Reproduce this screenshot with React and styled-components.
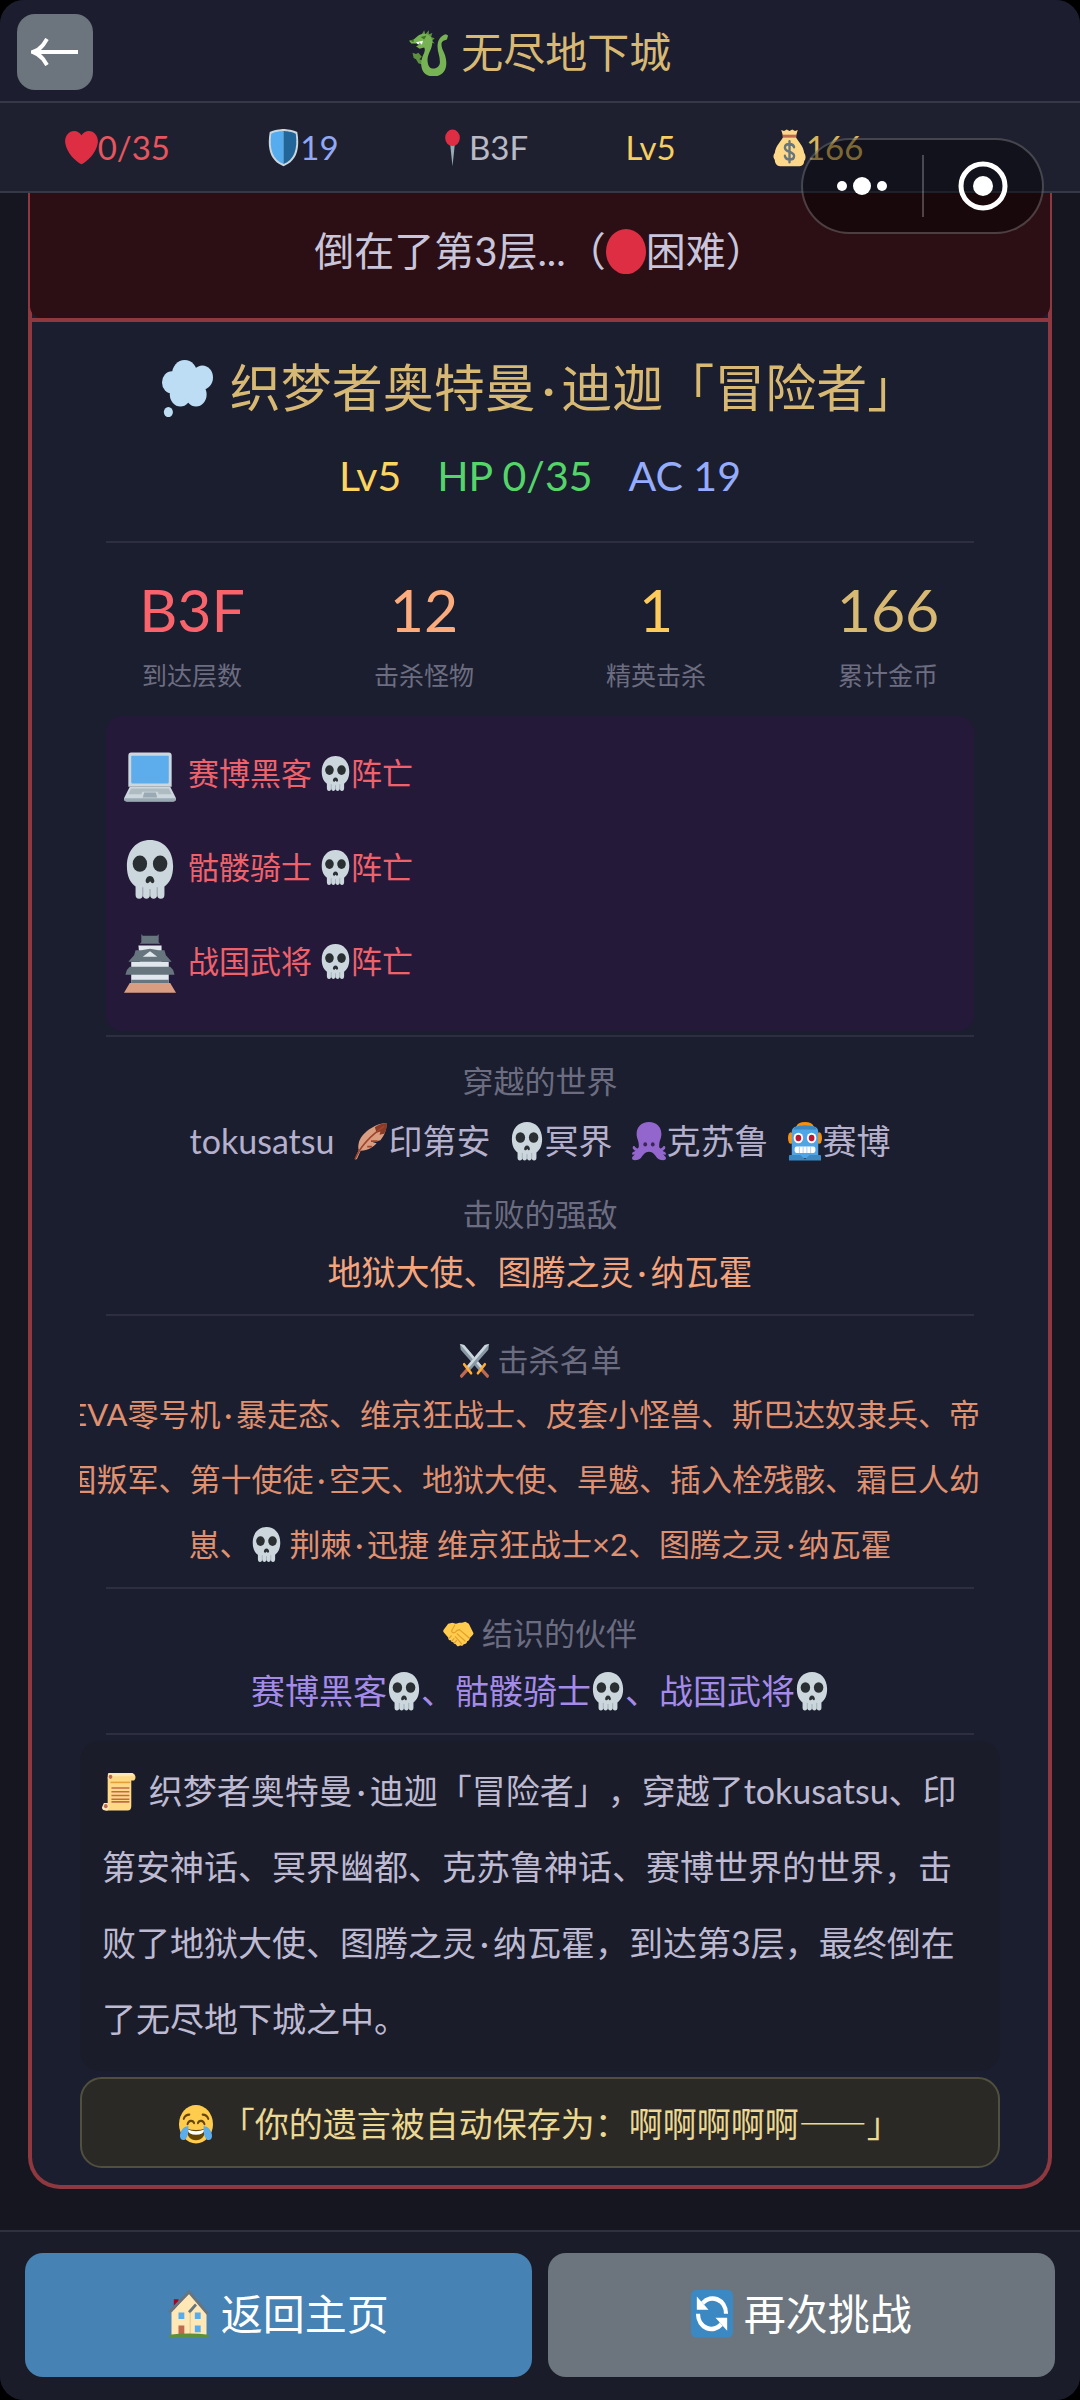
import React, { Fragment } from "react";
import styled, { createGlobalStyle } from "styled-components";

const GlobalStyle = createGlobalStyle`
  * {
    box-sizing: border-box;
  }

  body {
    margin: 0;
    background-color: #000;
    color: #c9c6dc;
    font-family: Lato, "Noto Sans CJK SC", sans-serif;
    text-spacing-trim: space-all;
  }
`;

const Page = styled.div`
  position: relative;
  display: flex;
  flex-direction: column;
  min-height: 100vh;
  background-color: #15161f;
  border-radius: 24px;
  overflow: hidden;
`;

const Header = styled.header`
  display: grid;
  grid-template-columns: 76px 1fr 76px;
  align-items: center;
  padding: 14px 17px 11px;
  background-color: #1c1e2f;
  border-bottom: 2px solid #363848;
`;

const BackButton = styled.button`
  display: flex;
  align-items: center;
  justify-content: center;
  width: 76px;
  height: 76px;
  padding: 0;
  border: none;
  border-radius: 18px;
  background-color: #6c757d;
  color: #fff;
`;

const Title = styled.h1`
  margin: 0;
  color: #d8b974;
  font-size: 42px;
  font-weight: 400;
  line-height: 60px;
  text-align: center;
`;

const StatusBar = styled.div`
  display: flex;
  align-items: center;
  justify-content: space-around;
  height: 90px;
  padding: 0 168px 0 16px;
  background-color: #1e202f;
  border-bottom: 2px solid #363848;
  font-size: 33px;
  line-height: 48px;
`;

const Tone = styled.span`
  color: ${(props) => props.$color};
  white-space: nowrap;
`;

const Capsule = styled.div`
  position: absolute;
  top: 138px;
  right: 36px;
  display: flex;
  align-items: center;
  width: 243px;
  height: 96px;
  border: 2px solid rgba(255, 255, 255, 0.22);
  border-radius: 48px;
  background-color: rgba(0, 0, 0, 0.42);
`;

const CapsuleButton = styled.button`
  display: flex;
  flex: 1;
  align-items: center;
  justify-content: center;
  padding: 0;
  border: none;
  background: none;
`;

const CapsuleLine = styled.span`
  width: 2px;
  height: 62px;
  background-color: rgba(255, 255, 255, 0.24);
`;

const Main = styled.main`
  flex: 1;
  padding: 0 28px 40px;
`;

const Card = styled.section`
  border: 4px solid #8f383f;
  border-top: none;
  border-radius: 0 0 32px 32px;
  background-color: #1b1e2f;
`;

const BannerFrame = styled.div`
  border-bottom: 4px solid #8f383f;
`;

const Banner = styled.p`
  margin: 0 -2px;
  padding: 28px 0 37px;
  border-radius: 0 0 12px 12px;
  background-color: #2c0f14;
  font-size: 40px;
  line-height: 60px;
  text-align: center;
`;

const Body = styled.div`
  display: flex;
  flex-direction: column;
  padding: 30px 48px 17px;
`;

const HeroName = styled.h2`
  margin: 0;
  color: #d8b974;
  font-size: 51px;
  font-weight: 400;
  line-height: 72px;
  text-align: center;
  white-space: nowrap;
`;

const HeroStats = styled.div`
  display: flex;
  justify-content: center;
  gap: 36px;
  margin: 24px 0 37px;
  font-size: 41px;
  line-height: 56px;
`;

const Divider = styled.hr`
  width: calc(100% - 52px);
  height: 2px;
  margin: 0 auto;
  border: none;
  background-color: #2d2f41;
`;

const Totals = styled.dl`
  display: grid;
  grid-template-columns: repeat(4, 1fr);
  margin: 31px -4px 23px;
`;

const Total = styled.div`
  display: flex;
  flex-direction: column-reverse;
  gap: 11px;
  text-align: center;
`;

const TotalValue = styled.dd`
  margin: 0;
  color: ${(props) => props.$color};
  font-size: 59px;
  line-height: 72px;
`;

const TotalLabel = styled.dt`
  color: #6c6d80;
  font-size: 25px;
  line-height: 36px;
`;

const Party = styled.ul`
  margin: 0 26px 4px;
  padding: 12px 18px 21px;
  border-radius: 16px;
  background-color: #25193a;
  list-style: none;
`;

const Member = styled.li`
  display: flex;
  align-items: center;
  gap: 12px;
  height: 94px;
  color: #f0626b;
  font-size: 31px;
`;

const Portrait = styled.span`
  font-size: 52px;
  line-height: 60px;
`;

const MemberName = styled.span`
  padding-bottom: 7px;
`;

const Label = styled.h3`
  margin: 22px 0 0;
  color: #6c6d80;
  font-size: 31px;
  font-weight: 400;
  line-height: 44px;
  text-align: center;
`;

const Worlds = styled.div`
  display: flex;
  justify-content: center;
  gap: 20px;
  margin: 14px 0 5px;
  color: #b5b0cc;
  font-size: 34px;
  line-height: 48px;
  white-space: nowrap;
`;

const TextLine = styled.p`
  margin: 12px 0 18px;
  color: ${(props) => props.$color};
  font-size: 34px;
  line-height: 48px;
  text-align: center;
`;

const KillList = styled.div`
  margin-bottom: 10px;
  overflow: hidden;
  color: #e0916f;
  font-size: 31px;
  line-height: 65px;
  white-space: nowrap;
`;

const KillRow = styled.div`
  display: flex;
  justify-content: ${(props) => (props.$last ? "center" : "flex-end")};
  padding-right: ${(props) => (props.$last ? "0" : "20px")};
`;

const Story = styled.p`
  margin: 6px 0;
  padding: 12px 22px 14px;
  border-radius: 20px;
  background-color: #1b1c2a;
  color: #bdbad1;
  font-size: 34px;
  line-height: 76px;
`;

const LastWords = styled.blockquote`
  margin: 0;
  padding: 19px 0;
  border: 2px solid #51503f;
  border-radius: 22px;
  background-color: #2b2925;
  color: #ead893;
  font-family: "Noto Sans CJK SC", sans-serif;
  font-size: 34px;
  line-height: 49px;
  text-align: center;
`;

const Dash = styled.span`
  font-variant-east-asian: full-width;
`;

const Footer = styled.footer`
  display: flex;
  gap: 16px;
  padding: 21px 25px 23px;
  border-top: 2px solid #30313f;
  background-color: #1b1c2a;
`;

const ActionButton = styled.button`
  flex: 1;
  height: 124px;
  padding: 0 0 8px;
  border: none;
  border-radius: 18px;
  background-color: ${(props) => (props.$primary ? "#4682b4" : "#6c757d")};
  color: #fff;
  font-family: inherit;
  font-size: 42px;
`;

const EmojiSvg = styled.svg`
  width: 1em;
  height: 1.13em;
  margin-right: ${(props) => (props.$lead ? "4px" : "0")};
  vertical-align: -0.2em;
`;

const Dot = styled.span`
  display: inline-block;
  width: 0.5em;
  text-align: center;
  font-family: Lato, sans-serif;
  line-height: 1;
`;

const emojis = {
  dragon: (
    <>
      <path
        fill="#5c903f"
        d="M11 4l2-3 1 3 3-3 0 3 3-1-1 3 3 1-2 2 2 2-10-2zM3 18l3 1 2-1 3 3-2 2 3 1-1 3-3-1-2-3-2-1z"
      />
      <path
        fill="#77b255"
        d="M8 5c5-3 12-1 12 5 0 6-5 9-4 15 .5 3.500 2 5 5 5s5.500-2 5.500-5c0-5-2.500-8-2-13 .4-4 3-7 7-8l2 1-1 3-3 1c-2 1-2 3-1 6 1.500 3 3.500 6 3.500 11 0 6-4 10-11 10-8 0-11-5-10.500-11C11 20 15 17 13 14l-4 1-3-2 3-1-2-1-5 0-2-2 4-1z"
      />
      <path fill="#3e721d" d="M10 6l5-1-2 3zM1 9l3-1 0 2z" />
      <path fill="#fff" d="M6 10l2 2 1-2 2 2 1-3z" />
    </>
  ),
  heart: (
    <path
      fill="#dd2e44"
      d="M35.885 11.833c0-5.450-4.418-9.868-9.867-9.868-3.308 0-6.227 1.633-8.018 4.129-1.791-2.496-4.710-4.129-8.017-4.129-5.450 0-9.868 4.417-9.868 9.868 0 .772.098 1.520.266 2.241C1.751 22.587 11.216 31.568 18 34.034c6.783-2.466 16.249-11.447 17.617-19.959.170-.721.268-1.469.268-2.242z"
    />
  ),
  shield: (
    <>
      <path
        fill="#ccd6dd"
        d="M33 3c-7-3-15-3-15-3S10 0 3 3C0 18 3 31 18 36c15-5 18-18 15-33z"
      />
      <path
        fill="#55acee"
        d="M18 33.900C6.500 29.600 2.300 19.600 4.600 4.500 11 2 18 2 18 2z"
      />
      <path
        fill="#226699"
        d="M18 33.900c11.500-4.300 15.700-14.300 13.400-29.400C25 2 18 2 18 2z"
      />
    </>
  ),
  pin: (
    <>
      <path fill="#99aab5" d="M15.500 15h5L18 36z" />
      <circle cx="18" cy="8.500" r="8" fill="#dd2e44" />
    </>
  ),
  bag: (
    <>
      <path
        fill="#fdd888"
        d="M11 8c-3 5-8 8-9 15-.5 1-1.500 2-1.500 3.500S1.500 29 2 30c0 3 2 6 6 6h21c3 0 5-2 5-5 1-1 1.500-2 1.500-4s-1-3-1.500-4c-1-7-6-10-9-15z"
      />
      <path fill="#fdd888" d="M9 1l3 1 3-1.500L18 2l3-1.500L24 2l3-1-2 6H11z" />
      <path fill="#bf6952" d="M10.500 5.500h15v2.500h-15z" />
      <path
        fill="none"
        stroke="#67757f"
        strokeWidth="2.600"
        strokeLinecap="round"
        d="M18 12v20M23 17.500c-1-4-10-4-10 .5s10 3.500 10 8-9 4.500-10 0"
      />
    </>
  ),
  red: <circle cx="18" cy="18" r="18" fill="#dd2e44" />,
  thought: (
    <g fill="#bdddf4">
      <circle cx="16" cy="9" r="9" />
      <circle cx="28.500" cy="11" r="7.500" />
      <circle cx="7" cy="14" r="7" />
      <circle cx="13" cy="21.500" r="7.500" />
      <circle cx="24" cy="21.500" r="7.500" />
      <circle cx="19" cy="15" r="9" />
      <circle cx="4.500" cy="32.500" r="3.200" />
    </g>
  ),
  laptop: (
    <>
      <path fill="#ccd6dd" d="M5 4h26q2 0 2 2v19H3V6q0-2 2-2z" />
      <path fill="#5dadec" d="M5.500 6h25q.5 0 .5.500V22q0 1-1 1H6q-1 0-1-1V6.500q0-.5.5-.5z" />
      <path fill="#ccd6dd" d="M4 25h28l4 7q0 2-2 2H2q-2 0-2-2z" />
      <path fill="#9aaab4" d="M0 32h36q0 2-2 2H2q-2 0-2-2z" />
      <path fill="#aebbc1" d="M5 26h26l2 3.500H24L23.500 28h-11l-.5 1.500H3z" />
      <path fill="#9aaab4" d="M14 28.500h8l1 3H13z" />
    </>
  ),
  skull: (
    <>
      <path
        fill="#ccd6dd"
        d="M34 16C34 6 27 0 18 0S2 6 2 16c0 6.500 2.500 10.500 6 12.500V33.500a2.500 2.500 0 005 0 2.500 2.500 0 000 0c0 3.300 5 3.300 5 0h0c0 3.300 5 3.300 5 0h0a2.500 2.500 0 005 0V28.500c3.500-2 6-6 6-12.500z"
      />
      <path
        stroke="#9aa7b0"
        strokeWidth=".8"
        d="M13 29v5M23 29v5M18 30v4"
      />
      <circle cx="11" cy="14.500" r="5" fill="#292f33" />
      <circle cx="25" cy="14.500" r="5" fill="#292f33" />
      <path
        fill="#292f33"
        d="M18 22c-2 0-3 2-3 3s.5 1.500 1.300 1.500S17.500 26 18 25.500s.9 1 1.700 1S21 26 21 25s-1-3-3-3z"
      />
    </>
  ),
  castle: (
    <>
      <path fill="#e1e8ed" d="M10 7h16v23H5V17h6z" />
      <path fill="#e1e8ed" d="M20 17h11v13H10z" />
      <path
        fill="#67757f"
        d="M12 0l1 1h10l1-1v5l1 1H11l1-1zM8 10h4l6-1 6 1h4l1 3 4 4H3l4-4zM4 20h28l2 2 1 3H1l1-3zM5 28h26v2H5z"
      />
      <path fill="#e1e8ed" d="M18 10.500l5 3.500H13z" />
      <path fill="#d99e82" d="M4 30h28l4 6H0z" />
    </>
  ),
  feather: (
    <>
      <path
        fill="#d99e82"
        d="M35 1C22 1 7 11 5 20c-1 4 0 6 0 6L1 35l2 0 4-8c8 0 14-4 17-7l-4-1 8-2c5-5 6-10 7-16z"
      />
      <path fill="#8a3b27" d="M35 1c-5 0-9 1.500-13 4l2 5 4-1-1 3 5-1c2-3 3-6 3-10z" />
      <path
        fill="none"
        stroke="#a0442c"
        strokeWidth="1.600"
        d="M1 35C7 22 17 13 32 4M14 23l5 0M18 18l7 0"
      />
    </>
  ),
  octopus: (
    <>
      <path
        fill="#9266cc"
        d="M18 0C9 0 4 6 5 13c.5 4 3 6 2 11-.5 1.500-3 .5-4-1-1-1-3 0-2 2 1 1 2 2 3 2-2 1-4 1-4 3 0 1 2 1 3 0-1 2-3 2-3 4 0 3 8 2 10-1 2-2 4-5 8-5s6 3 8 5c2 3 10 4 10 1 0-2-2-2-3-4 1 1 3 1 3 0 0-2-2-2-4-3 1 0 2-1 3-2 1-2-1-3-2-2-1 1.500-3.500 2.500-4 1-1-5 1.500-7 2-11C32 6 27 0 18 0z"
      />
      <circle cx="14" cy="21" r="2" fill="#3a2657" />
      <circle cx="22" cy="21" r="2" fill="#3a2657" />
    </>
  ),
  robot: (
    <>
      <ellipse cx="18" cy="4" rx="9" ry="4" fill="#f4900c" />
      <ellipse cx="3" cy="15" rx="3" ry="5.500" fill="#f4900c" />
      <ellipse cx="33" cy="15" rx="3" ry="5.500" fill="#f4900c" />
      <path fill="#50a5e6" d="M4 9c0-3 3-5 6-5h16c3 0 6 2 6 5v25H4z" />
      <path fill="#3b88c3" d="M7 5q11-4 22 0l1 2H6zM1 32q0-1 1-1h11l5 4 5-4h11q1 0 1 1v4H1z" />
      <circle cx="11" cy="15" r="5" fill="#fff" />
      <circle cx="25" cy="15" r="5" fill="#fff" />
      <circle cx="11" cy="15" r="3" fill="#be1931" />
      <circle cx="25" cy="15" r="3" fill="#be1931" />
      <rect x="7" y="23" width="22" height="6" rx="2" fill="#fff" />
      <path stroke="#a7cfee" strokeWidth="1" d="M12 23v6M16 23v6M20 23v6M24 23v6" />
    </>
  ),
  swords: (
    <>
      <path fill="#8899a6" d="M1 1l5 1 21 22-4 4L2 7z" />
      <path fill="#ccd6dd" d="M1 1l5 1 21 22-2 2z" />
      <path fill="#8899a6" d="M35 1l-5 1L9 24l4 4L34 7z" />
      <path fill="#ccd6dd" d="M35 1l-5 1L9 24l2 2z" />
      <path
        fill="none"
        stroke="#bf6952"
        strokeWidth="3.500"
        strokeLinecap="round"
        d="M26 27l7 7M10 27l-7 7"
      />
      <path
        fill="none"
        stroke="#ffac33"
        strokeWidth="3"
        strokeLinecap="round"
        d="M22 31l8-9M14 31l-8-9"
      />
    </>
  ),
  handshake: (
    <>
      <path
        fill="#ffcc4d"
        d="M6 8l5-1 4 1 4-1 3 0 4-1 4 2 5 9c1 1 0 2-1 3l-3 3c0 2-2 3-3 3 0 2-2 3-4 3-1 2-3 2-4 1-2 2-4 1-5-1-2 0-3-1-3-2-2 0-3-1-3-2-2 0-3-1-3-3l-5-5c-1-1-1-2 0-3z"
      />
      <path
        fill="none"
        stroke="#e39f2b"
        strokeWidth="1.300"
        d="M14 9l-4 6c0 3 4 3 6 0l3-1 12 9M16 18l10 8M14 21l8 8M7 23l3-3M10 26l3-3M13 28l3-3"
      />
    </>
  ),
  scroll: (
    <>
      <path fill="#ffd983" d="M7 1h25a4 4 0 012 7h-3v24q0 4-4 4H4a4 4 0 010-7h2V4q0-2 1-3z" />
      <path fill="#ffe8b6" d="M7 1h25l2 3H10v3l-4-1zM2 29h3l3 3-2 4H4q-4 0-4-3z" />
      <circle cx="9" cy="4.500" r="2" fill="#c1694f" />
      <circle cx="4" cy="32" r="2" fill="#c1694f" />
      <path fill="#e39f3d" d="M9 9h21v1.500H9z" />
      <path
        stroke="#c1694f"
        strokeWidth="1.500"
        d="M10 15h19M10 18.500h19M10 22h19M10 25.500h19M10 28h19"
      />
    </>
  ),
  joy: (
    <>
      <circle cx="18" cy="18" r="18" fill="#ffcc4d" />
      <path
        fill="none"
        stroke="#664500"
        strokeWidth="2"
        strokeLinecap="round"
        d="M9 18c1-4 6-4 7-1M27 18c-1-4-6-4-7-1M5 13c1-3 3-4 6-4M31 13c-1-3-3-4-6-4"
      />
      <path fill="#664500" d="M8 22q10 3 20 0c0 7-4 11-10 11S8 29 8 22z" />
      <path fill="#fff" d="M9 23q9 3 18 0-1 5-9 5t-9-5z" />
      <path
        fill="#5dadec"
        d="M10 20c-4-1-9 4-9 9 0 3 3 5 6 3 3-3 3-8 3-12zM26 20c4-1 9 4 9 9 0 3-3 5-6 3-3-3-3-8-3-12z"
      />
    </>
  ),
  house: (
    <>
      <path fill="#a0041e" d="M5 7h4v8H5z" />
      <path fill="#ffe8b6" d="M3 17L18 2l9 9 6 7v17H3z" />
      <path
        fill="none"
        stroke="#66757f"
        strokeWidth="2.400"
        d="M1 17L18 1.500 34 18M18 17l6-6"
      />
      <path stroke="#e6c98c" d="M19 17v17" />
      <path
        fill="#55acee"
        d="M9 17h5v5H9zM23 17h5v5h-5zM23 27h5v5h-5z"
      />
      <path fill="#c1694f" d="M9 27h5v7H9z" />
      <path fill="#5c913b" d="M1 34q17-2 34 0v2H1z" />
    </>
  ),
  cycle: (
    <>
      <rect width="36" height="36" rx="4" fill="#3b88c3" />
      <path
        fill="none"
        stroke="#fff"
        strokeWidth="3.600"
        d="M10 10c7-7 20-3 20 8M26 26c-7 7-20 3-20-8"
      />
      <path fill="#fff" d="M5 5v10h10zM31 31V21H21z" />
    </>
  ),
};

const Emoji = ({ name, lead }) => (
  <EmojiSvg
    $lead={lead}
    viewBox="0 0 36 36"
    preserveAspectRatio="none"
    aria-hidden="true"
  >
    {emojis[name]}
  </EmojiSvg>
);

// gives the middle dot of a name half a character of room
const Names = ({ children }) => (
  <span>
    {children.split("·").map((part, index) => (
      <Fragment key={index}>
        {index > 0 && <Dot>·</Dot>}
        {part}
      </Fragment>
    ))}
  </span>
);

const totals = [
  { label: "到达层数", value: "B3F", color: "#f9646c" },
  { label: "击杀怪物", value: "12", color: "#fcab7d" },
  { label: "精英击杀", value: "1", color: "#fdca5c" },
  { label: "累计金币", value: "166", color: "#d8b974" },
];

const party = [
  { name: "赛博黑客", icon: "laptop" },
  { name: "骷髅骑士", icon: "skull" },
  { name: "战国武将", icon: "castle" },
];

const worlds = [
  { name: "tokusatsu" },
  { name: "印第安", icon: "feather" },
  { name: "冥界", icon: "skull" },
  { name: "克苏鲁", icon: "octopus" },
  { name: "赛博", icon: "robot" },
];

const App = () => {
  return (
    <>
      <GlobalStyle />
      <Page lang="zh-CN">
        <Header>
          <BackButton aria-label="返回">
            <svg width="48" height="28" viewBox="0 0 48 28" fill="none">
              <path
                d="M47 14H3M16 1L12 7Q8 12 2 14 8 16 12 21L16 27"
                stroke="currentColor"
                strokeWidth="4"
              />
            </svg>
          </BackButton>
          <Title>
            <Emoji name="dragon" /> 无尽地下城
          </Title>
        </Header>

        <StatusBar>
          <Tone $color="#e8555f"><Emoji name="heart" />0/35</Tone>
          <Tone $color="#93a8f4"><Emoji name="shield" />19</Tone>
          <Tone $color="#b9bac6"><Emoji name="pin" />B3F</Tone>
          <Tone $color="#f5cf62">Lv5</Tone>
          <Tone $color="#d8b45c"><Emoji name="bag" />166</Tone>
        </StatusBar>

        <Main>
          <Card>
            <BannerFrame>
              <Banner>
                倒在了第3层...（<Emoji name="red" />困难）
              </Banner>
            </BannerFrame>
            <Body>
              <HeroName>
                <Emoji name="thought" lead /> <Names>织梦者奥特曼·迪迦「冒险者」</Names>
              </HeroName>
              <HeroStats>
                <Tone $color="#fbd55f">Lv5</Tone>
                <Tone $color="#55d46a">HP 0/35</Tone>
                <Tone $color="#95acfb">AC 19</Tone>
              </HeroStats>
              <Divider />
              <Totals>
                {totals.map((total) => (
                  <Total key={total.label}>
                    <TotalLabel>{total.label}</TotalLabel>
                    <TotalValue $color={total.color}>{total.value}</TotalValue>
                  </Total>
                ))}
              </Totals>
              <Party>
                {party.map((member) => (
                  <Member key={member.name}>
                    <Portrait><Emoji name={member.icon} /></Portrait>
                    <MemberName>
                      {member.name} <Emoji name="skull" />阵亡
                    </MemberName>
                  </Member>
                ))}
              </Party>
              <Divider />
              <Label>穿越的世界</Label>
              <Worlds>
                {worlds.map((world) => (
                  <span key={world.name}>
                    {world.icon && <Emoji name={world.icon} />}
                    {world.name}
                  </span>
                ))}
              </Worlds>
              <Label>击败的强敌</Label>
              <TextLine $color="#f5a57c">
                <Names>地狱大使、图腾之灵·纳瓦霍</Names>
              </TextLine>
              <Divider />
              <Label><Emoji name="swords" /> 击杀名单</Label>
              <KillList>
                <KillRow>
                  <Names>EVA零号机·暴走态、维京狂战士、皮套小怪兽、斯巴达奴隶兵、帝</Names>
                </KillRow>
                <KillRow>
                  <Names>国叛军、第十使徒·空天、地狱大使、旱魃、插入栓残骸、霜巨人幼</Names>
                </KillRow>
                <KillRow $last>
                  <span>
                    崽、<Emoji name="skull" />{" "}
                    <Names>荆棘·迅捷 维京狂战士×2、图腾之灵·纳瓦霍</Names>
                  </span>
                </KillRow>
              </KillList>
              <Divider />
              <Label><Emoji name="handshake" /> 结识的伙伴</Label>
              <TextLine $color="#a58be8">
                赛博黑客<Emoji name="skull" />、骷髅骑士<Emoji name="skull" />、战国武将
                <Emoji name="skull" />
              </TextLine>
              <Divider />
              <Story>
                <Emoji name="scroll" lead />{" "}
                <Names>
                  织梦者奥特曼·迪迦「冒险者」，穿越了tokusatsu、印第安神话、冥界幽都、克苏鲁神话、赛博世界的世界，击败了地狱大使、图腾之灵·纳瓦霍，到达第3层，最终倒在了无尽地下城之中。
                </Names>
              </Story>
              <LastWords>
                <Emoji name="joy" /> 「你的遗言被自动保存为：啊啊啊啊啊<Dash>——</Dash>」
              </LastWords>
            </Body>
          </Card>
        </Main>

        <Footer>
          <ActionButton $primary>
            <Emoji name="house" /> 返回主页
          </ActionButton>
          <ActionButton>
            <Emoji name="cycle" /> 再次挑战
          </ActionButton>
        </Footer>

        <Capsule>
          <CapsuleButton aria-label="更多">
            <svg width="52" height="20" viewBox="0 0 52 20" fill="#fff">
              <circle cx="6" cy="10" r="5" />
              <circle cx="26" cy="10" r="9" />
              <circle cx="46" cy="10" r="5" />
            </svg>
          </CapsuleButton>
          <CapsuleLine />
          <CapsuleButton aria-label="关闭">
            <svg width="52" height="52" viewBox="0 0 52 52">
              <circle cx="26" cy="26" r="22" fill="none" stroke="#fff" strokeWidth="5" />
              <circle cx="26" cy="26" r="10" fill="#fff" />
            </svg>
          </CapsuleButton>
        </Capsule>
      </Page>
    </>
  );
};

export default App;
